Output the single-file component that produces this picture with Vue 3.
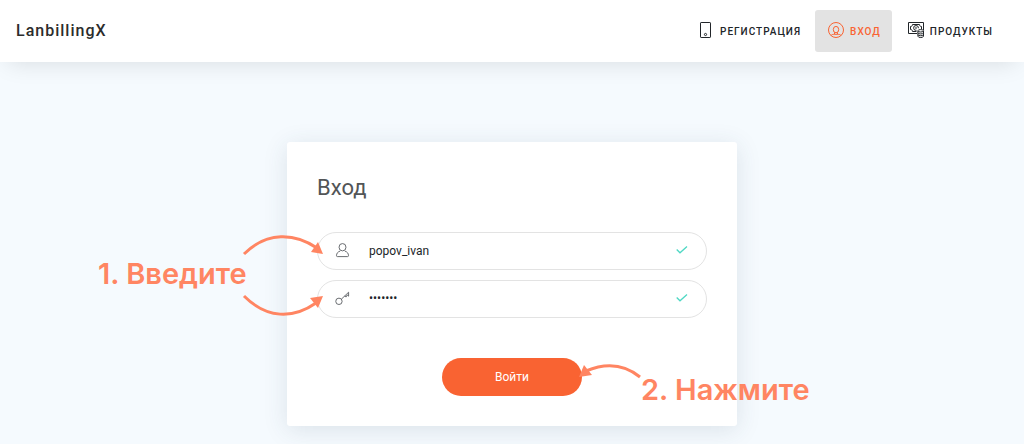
<script setup>
import { ref } from 'vue'

const login = ref('popov_ivan')
const password = ref('1234567')
</script>

<template>
  <div class="page">
    <header class="header">
      <a class="brand" href="#">LanbillingX</a>
      <nav class="nav">
        <a class="nav-link" href="#">
          <svg class="icon" viewBox="0 0 16 16" aria-hidden="true">
            <rect x="2.5" y="0.5" width="10" height="15" rx="0.6" />
            <circle cx="7.5" cy="12.5" r="1.1" />
          </svg>
          <span>РЕГИСТРАЦИЯ</span>
        </a>
        <a class="nav-link active" href="#" aria-current="page">
          <svg class="icon" viewBox="0 0 16 16" aria-hidden="true">
            <circle cx="8" cy="8" r="7.5" />
            <ellipse cx="8" cy="7.6" rx="2.7" ry="3.2" />
            <path d="M3 13.5C3.5 12.3 5 12.5 6.5 12.3V10.5M13 13.5C12.5 12.3 11 12.5 9.5 12.3V10.5M6.5 12.3H9.5" />
          </svg>
          <span>ВХОД</span>
        </a>
        <a class="nav-link" href="#">
          <svg class="icon" viewBox="0 0 16 16" aria-hidden="true">
            <path d="M9 11.5H0.5V0.5H15.5V8" />
            <path d="M8.5 9.5H4.5C4.5 8.2 3.8 7.5 2.5 7.5V4.5C3.8 4.5 4.5 3.8 4.5 2.5H11.5C11.5 3.8 12.2 4.5 13.5 4.5V7" />
            <path d="M8.5 8.3A2.4 2.4 0 1 1 10.4 6.2" />
            <circle cx="8" cy="6" r="0.4" />
            <ellipse cx="12.7" cy="8.8" rx="2.8" ry="1.2" />
            <path d="M9.9 9V14.2C9.9 16 15.5 16 15.5 14.2V9M9.9 10.8C9.9 12.3 15.5 12.3 15.5 10.8M9.9 12.6C9.9 14.1 15.5 14.1 15.5 12.6" />
          </svg>
          <span>ПРОДУКТЫ</span>
        </a>
      </nav>
    </header>

    <main class="main">
      <section class="card">
        <h1 class="title">Вход</h1>
        <form @submit.prevent>
          <label class="field">
            <svg class="icon" viewBox="0 0 16 16" aria-hidden="true">
              <ellipse cx="8" cy="4.5" rx="3.7" ry="3.9" />
              <path d="M5.5 8.6C3 9.4 1.6 11 1.6 13.6C1.6 14.2 2 14.5 2.6 14.5H13.4C14 14.5 14.4 14.2 14.4 13.6C14.4 11 13 9.4 10.5 8.6" />
            </svg>
            <input v-model="login" class="text" type="text" aria-label="Логин" autocomplete="off" />
            <svg class="check" viewBox="0 0 12 8" aria-hidden="true"><path d="M0.7 3.5L4 6.8L11 0.5" /></svg>
          </label>
          <label class="field">
            <svg class="icon" viewBox="0 0 16 16" aria-hidden="true">
              <circle cx="4.2" cy="11" r="3.4" />
              <path d="M6.8 8.7L14.5 1.3V5.5L13 4.2L11.9 6.3L10.2 5.5" />
            </svg>
            <input v-model="password" type="password" aria-label="Пароль" autocomplete="off" />
            <svg class="check" viewBox="0 0 12 8" aria-hidden="true"><path d="M0.7 3.5L4 6.8L11 0.5" /></svg>
          </label>
          <button class="submit" type="submit">Войти</button>
        </form>

        <svg class="arrows" viewBox="0 0 450 284" aria-hidden="true">
          <path class="curve" d="M-43 112C-20 89 8 91 30 106" />
          <path class="head" d="M36 112L24 110L31 100Z" />
          <path class="curve" d="M-43 154C-20 177 6 177 29 161" />
          <path class="head" d="M36 154L23 156L31 166Z" />
          <path class="curve" d="M353 235C337 222 318 221 299 229" />
          <path class="head" d="M292 235L297 223L305 233Z" />
        </svg>
        <span class="note note-enter">1. Введите</span>
        <span class="note note-press">2. Нажмите</span>
      </section>
    </main>
  </div>
</template>

<style>
body {
  margin: 0;
  background: #f5fafe;
}
</style>

<style scoped>
.page {
  display: flex;
  flex-direction: column;
  min-height: 100vh;
  overflow: hidden;
  font-family: Roboto, "Liberation Sans", sans-serif;
  color: #212529;
}

.header {
  display: flex;
  align-items: center;
  justify-content: space-between;
  padding: 10px 20px 10px 16px;
  background: #fff;
  box-shadow: 0 8px 24px -8px rgba(0, 0, 0, 0.13);
}

.brand {
  color: #2c2c2c;
  font-size: 16px;
  font-weight: 500;
  line-height: 20px;
  letter-spacing: 1px;
  text-decoration: none;
}

.nav {
  display: flex;
  gap: 3px;
}

.nav-link {
  display: flex;
  align-items: center;
  gap: 6px;
  height: 42px;
  padding: 0 11px 0 13px;
  border-radius: 3px;
  box-sizing: border-box;
  color: #212529;
  font-size: 10px;
  font-weight: 500;
  letter-spacing: 1px;
  text-decoration: none;
}

.nav-link .icon {
  margin-bottom: 2px;
}

.nav-link.active {
  background: #e3e3e3;
  color: #f96332;
}

.icon {
  flex: none;
  width: 16px;
  height: 16px;
  overflow: visible;
  fill: none;
  stroke: currentColor;
}

.main {
  display: flex;
  justify-content: center;
  padding: 80px 16px 18px;
}

.card {
  position: relative;
  width: 100%;
  max-width: 450px;
  padding: 30px;
  box-sizing: border-box;
  border-radius: 3px;
  background: #fff;
  box-shadow: 0 4px 24px rgba(50, 70, 90, 0.13);
}

.title {
  margin: 0 0 28px;
  color: #525557;
  font-size: 22px;
  font-weight: 400;
  line-height: 32px;
}

.field {
  display: flex;
  align-items: center;
  height: 38px;
  margin-bottom: 10px;
  padding: 0 18px 2px 17px;
  border: 1px solid #e3e3e3;
  border-radius: 19px;
  box-sizing: border-box;
  color: #606367;
}

.field .icon {
  width: 15px;
  height: 15px;
}

.field input {
  flex: 1;
  min-width: 0;
  margin: 0 0 0 19px;
  padding: 0;
  border: 0;
  outline: 0;
  background: transparent;
  color: #212529;
  font: 12px/18px Roboto, "Liberation Sans", sans-serif;
}

.field .text {
  padding-top: 2px;
}

.check {
  width: 12px;
  height: 8px;
  fill: none;
  stroke: #4fd8c4;
  stroke-width: 1.3;
}

.submit {
  display: block;
  width: 140px;
  height: 38px;
  margin: 40px auto 0;
  padding: 0;
  border: 0;
  border-radius: 19px;
  background: #f96332;
  color: #fff;
  font: 12px/18px Roboto, "Liberation Sans", sans-serif;
}

.arrows {
  position: absolute;
  top: 0;
  left: 0;
  width: 450px;
  height: 284px;
  overflow: visible;
  pointer-events: none;
}

.curve {
  fill: none;
  stroke: #ff8562;
  stroke-width: 3;
}

.head {
  fill: #ff8562;
}

.note {
  position: absolute;
  color: #ff8562;
  font: 600 29px/38px Inter, "Open Sans", sans-serif;
  white-space: nowrap;
}

.note-enter {
  top: 113px;
  left: -189px;
}

.note-press {
  top: 229px;
  left: 354px;
}
</style>
